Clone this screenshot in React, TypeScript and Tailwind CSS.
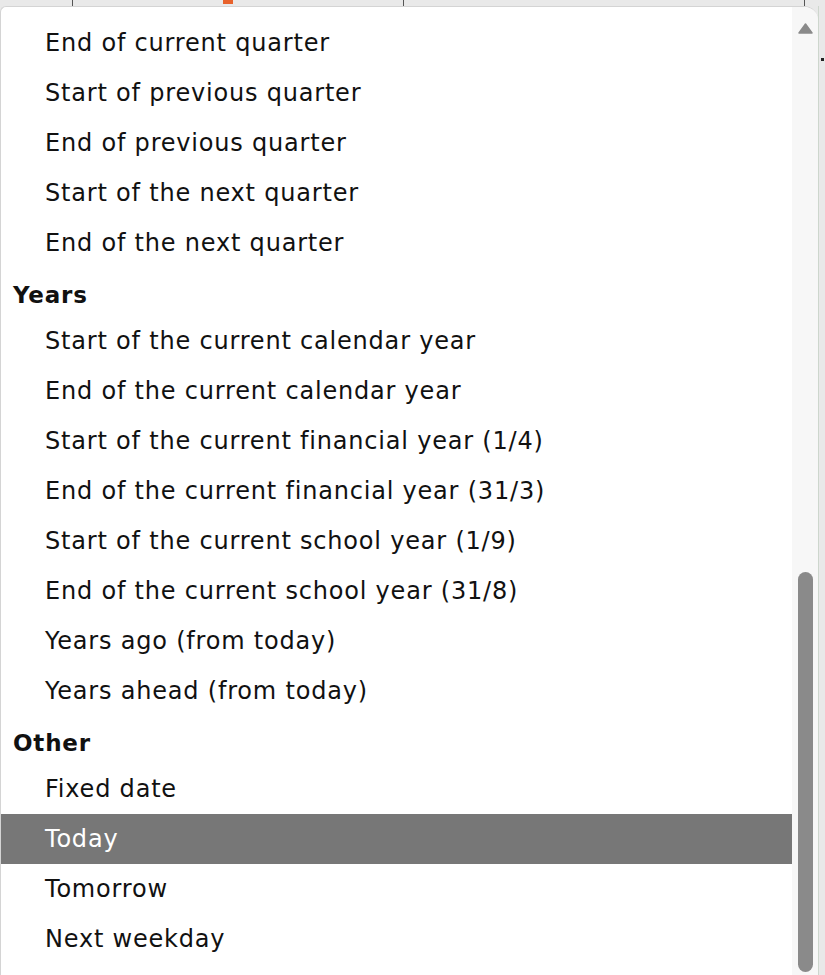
import React from "react";

type Row = { label: string; heading?: boolean; active?: boolean };

const rows: Row[] = [
  { label: "End of current quarter" },
  { label: "Start of previous quarter" },
  { label: "End of previous quarter" },
  { label: "Start of the next quarter" },
  { label: "End of the next quarter" },
  { label: "Years", heading: true },
  { label: "Start of the current calendar year" },
  { label: "End of the current calendar year" },
  { label: "Start of the current financial year (1/4)" },
  { label: "End of the current financial year (31/3)" },
  { label: "Start of the current school year (1/9)" },
  { label: "End of the current school year (31/8)" },
  { label: "Years ago (from today)" },
  { label: "Years ahead (from today)" },
  { label: "Other", heading: true },
  { label: "Fixed date" },
  { label: "Today", active: true },
  { label: "Tomorrow" },
  { label: "Next weekday" },
];

const App: React.FC = () => {
  return (
    <div
      className="w-[825px] h-[975px] bg-[#e9e9e9] flex flex-col overflow-hidden"
      style={{ fontFamily: '"DejaVu Sans", "Noto Sans", sans-serif' }}
    >
      {/* strip of the toolbar behind the popup */}
      <div className="h-[6px] flex items-start">
        <div className="w-[72px]" />
        <div className="w-[1px] h-[6px] bg-[#555]" />
        <div className="w-[150px]" />
        <div className="w-[10px] h-[4px] bg-[#e8622c]" />
        <div className="w-[170px]" />
        <div className="w-[1px] h-[6px] bg-[#555]" />
        <div className="w-[400px]" />
        <div className="w-[1px] h-[6px] bg-[#555]" />
      </div>

      <div className="flex flex-1">
        <div className="w-[818px] bg-white rounded-tr-[14px] rounded-tl-[6px] border-l border-t border-[#d4d4d4] flex overflow-hidden">
          <div className="flex-1 pt-[11px]">
            {rows.map((r, i) =>
              r.heading ? (
                <div
                  key={i}
                  className="h-[48px] pl-[12px] pt-[6px] flex items-center text-[23px] tracking-[0.8px] font-bold text-[#111]"
                >
                  {r.label}
                </div>
              ) : (
                <div
                  key={i}
                  className={
                    r.active
                      ? "h-[50px] pl-[44px] flex items-center text-[24px] tracking-[0.8px] bg-[#777777] text-white"
                      : "h-[50px] pl-[44px] flex items-center text-[24px] tracking-[0.8px] text-[#111]"
                  }
                >
                  {r.label}
                </div>
              )
            )}
          </div>

          {/* scrollbar */}
          <div className="w-[26px] bg-[#f7f7f7] flex flex-col items-center pt-[16px]">
            <svg width="15" height="11" viewBox="0 0 15 11">
              <path d="M7.5 1 L14 10 L1 10 Z" fill="#8a8a8a" stroke="#8a8a8a" strokeLinejoin="round" strokeWidth="1.5" />
            </svg>
            <div className="flex-1" />
            <div className="w-[15px] h-[400px] rounded-full bg-[#8a8a8a] mb-[3px]" />
          </div>
        </div>

        <div className="flex-1 border-l border-[#cdd6cd] flex flex-col">
          <div className="h-[52px]" />
          <div className="w-[3px] h-[3px] bg-[#222] ml-[2px]" />
        </div>
      </div>
    </div>
  );
};

export default App;
